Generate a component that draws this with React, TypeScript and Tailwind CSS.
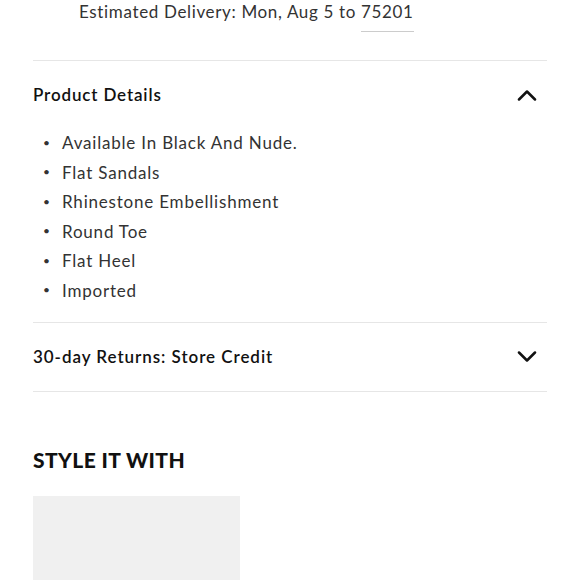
const details = [
  'Available In Black And Nude.',
  'Flat Sandals',
  'Rhinestone Embellishment',
  'Round Toe',
  'Flat Heel',
  'Imported',
];

function Chevron({ up }: { up?: boolean }) {
  return (
    <svg width="20" height="12" viewBox="0 0 20 12" fill="none" className="mr-[10px]">
      <path
        d={up ? 'M2 10.5L10 2.5L18 10.5' : 'M2 1.5L10 9.5L18 1.5'}
        stroke="#111"
        strokeWidth="2.5"
        strokeLinecap="round"
        strokeLinejoin="round"
      />
    </svg>
  );
}

export default function App() {
  return (
    <div className="min-h-[580px] bg-white font-['Lato','Noto_Sans',sans-serif] overflow-hidden">
      <div className="px-[33px] w-[580px]">
        <div className="h-[60px] pl-[46px] text-[17px] leading-[24px] text-[#333] tracking-[0.65px]">
          Estimated Delivery: Mon, Aug 5 to{' '}
          <span className="inline-block border-b border-[#ccc] pb-[7px]">75201</span>
        </div>

        <div className="border-t border-[#e6e6e6]">
          <div className="h-[67px] flex items-center justify-between">
            <span className="text-[17px] font-semibold text-[#111] tracking-[0.85px]">Product Details</span>
            <Chevron up />
          </div>
          <ul className="pb-[17px]">
            {details.map((d) => (
              <li key={d} className="flex items-center h-[29.5px] text-[17px] text-[#333] tracking-[0.8px]">
                <span className="w-[29px] pl-[10px] text-[12px]">•</span>
                {d}
              </li>
            ))}
          </ul>
        </div>

        <div className="border-t border-[#e6e6e6]">
          <div className="h-[68px] flex items-center justify-between">
            <span className="text-[17px] font-semibold text-[#111] tracking-[0.95px]">
              30-day Returns: Store Credit
            </span>
            <Chevron />
          </div>
        </div>

        <div className="border-t border-[#e6e6e6] pt-[55px]">
          <h2 className="text-[21px] leading-[26px] font-black text-[#111] tracking-[0.4px]">STYLE IT WITH</h2>
          <div className="mt-[23px] w-[207px] h-[100px] bg-[#f0f0f0]" />
        </div>
      </div>
    </div>
  );
}
